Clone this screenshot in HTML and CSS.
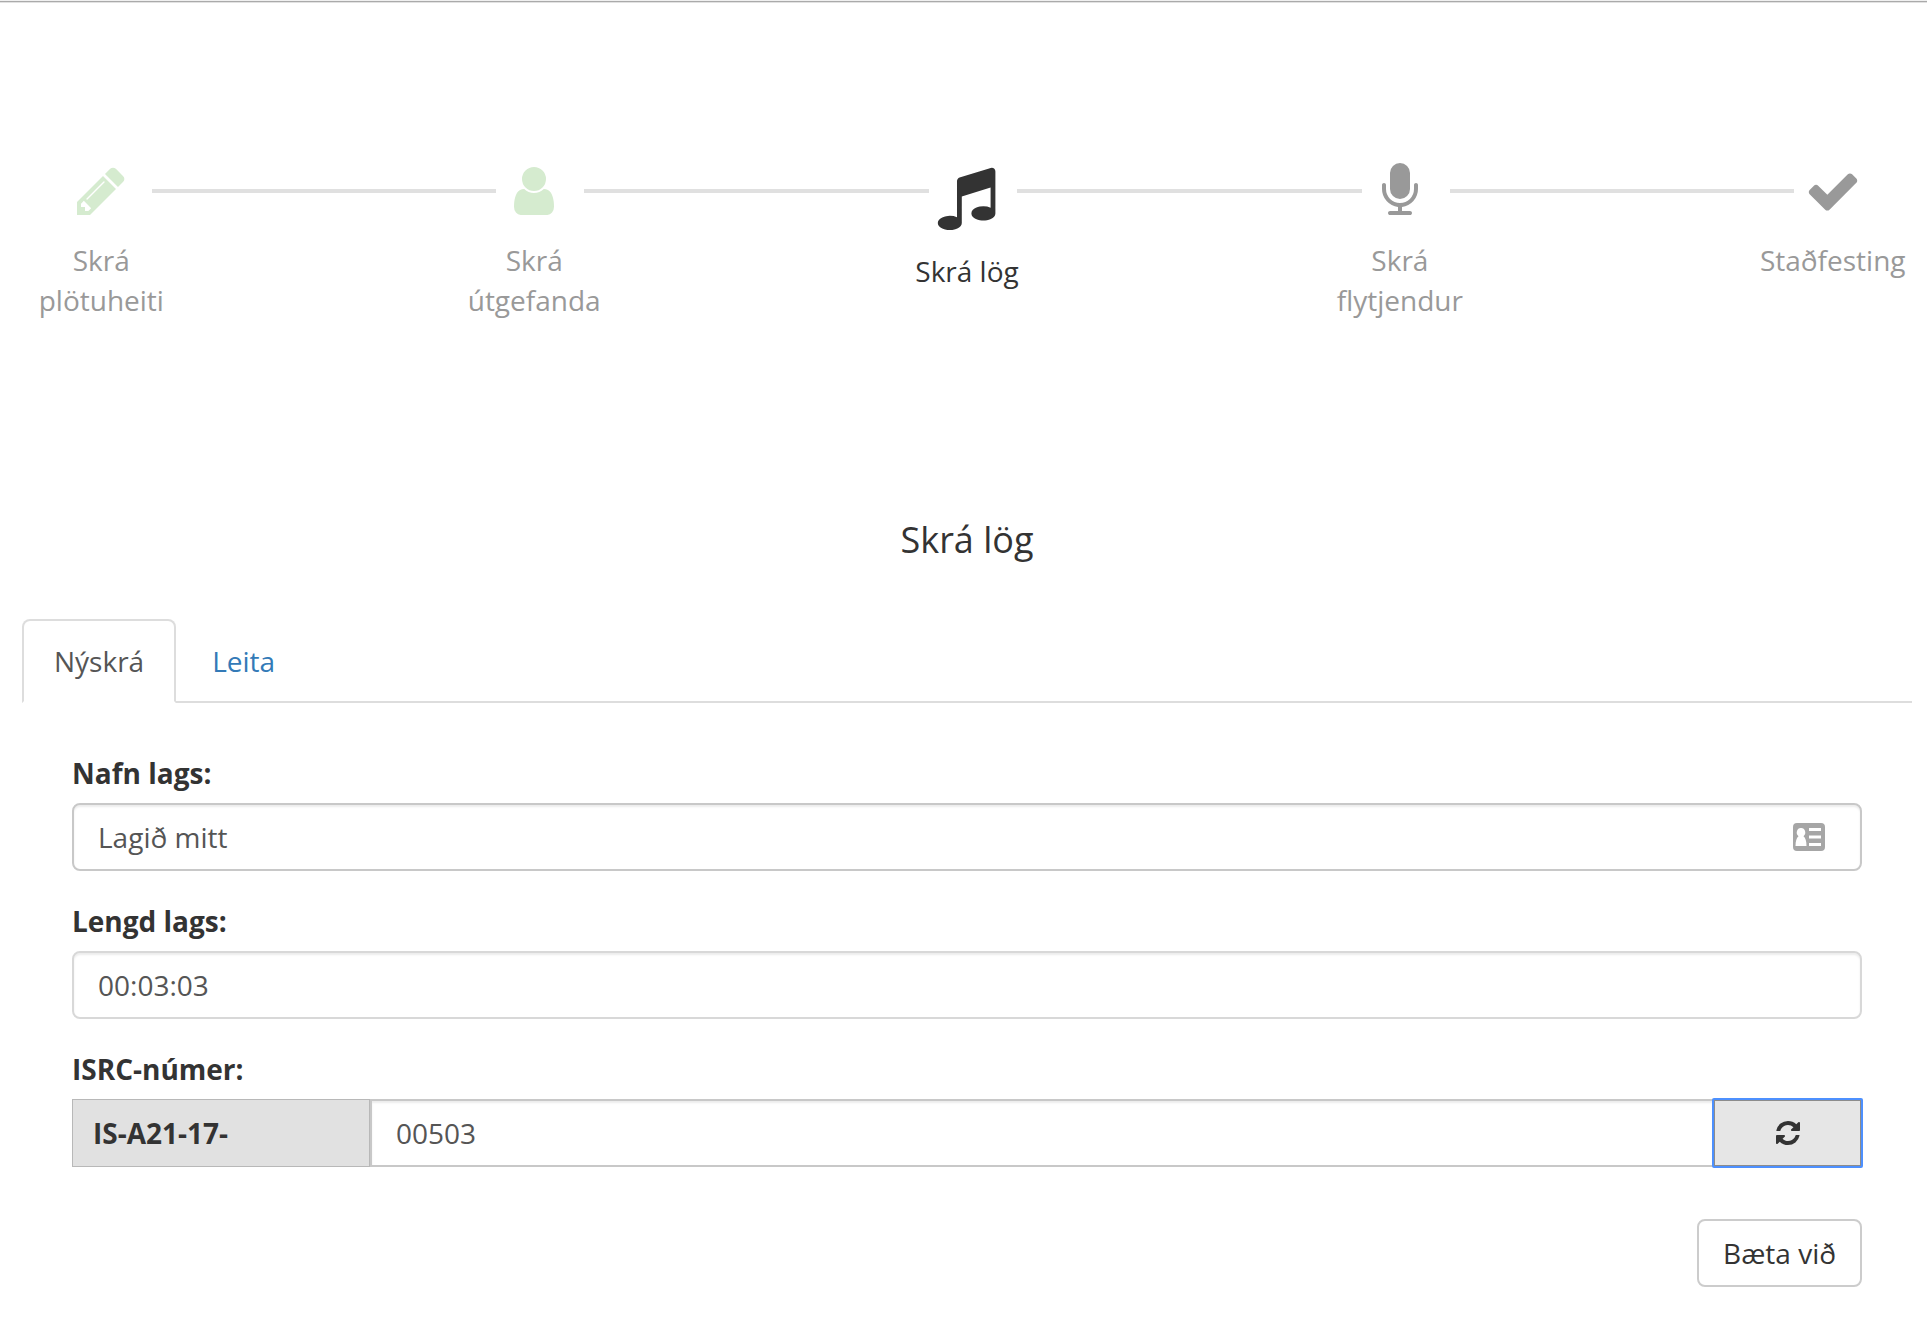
FILE: index.html
```html
<!DOCTYPE html>
<html lang="is">
<head>
<meta charset="utf-8">
<title>Skrá lög</title>
<link rel="stylesheet" href="styles.css">
</head>
<body>
<main class="page">
  <nav class="steps">
    <div class="step done">
      <svg class="icon" viewBox="0 0 1792 1792"><path d="M491 1536l91-91-235-235-91 91v107h128v128h107zm523-928q0-22-22-22-10 0-17 7l-542 542q-7 7-7 17 0 22 22 22 10 0 17-7l542-542q7-7 7-17zm-54-192l416 416-832 832h-416v-416zm683 96q0 53-37 90l-166 166-416-416 166-165q36-38 90-38 53 0 91 38l235 234q37 39 37 91z"/></svg>
      <div class="step-label">Skrá<br>plötuheiti</div>
    </div>
    <div class="connector"></div>
    <div class="step done">
      <svg class="icon" viewBox="0 0 1792 1792"><path d="M1536 1399q0 109-62.500 187t-150.500 78h-854q-88 0-150.500-78t-62.500-187q0-85 8.500-160.500t31.500-152 58.500-131 94-89 134.500-34.500q131 128 313 128t313-128q76 0 134.500 34.500t94 89 58.500 131 31.500 152 8.500 160.500zm-256-887q0 159-112.500 271.500t-271.500 112.500-271.500-112.500-112.500-271.500 112.500-271.500 271.500-112.500 271.500 112.500 112.500 271.500z"/></svg>
      <div class="step-label">Skrá<br>útgefanda</div>
    </div>
    <div class="connector"></div>
    <div class="step current">
      <svg class="icon" viewBox="0 0 1792 1792"><path d="M1664 224v1120q0 50-34 89t-86 60.500-103.500 32-96.500 10.500-96.500-10.500-103.500-32-86-60.500-34-89 34-89 86-60.500 103.500-32 96.500-10.500q105 0 192 39v-537l-768 237v709q0 50-34 89t-86 60.500-103.500 32-96.500 10.500-96.500-10.500-103.500-32-86-60.500-34-89 34-89 86-60.500 103.500-32 96.500-10.500q105 0 192 39v-967q0-31 19-56.500t49-35.500l832-256q12-4 28-4 40 0 68 28t28 68z"/></svg>
      <div class="step-label">Skrá lög</div>
    </div>
    <div class="connector"></div>
    <div class="step">
      <svg class="icon" viewBox="0 0 1792 1792"><path d="M1472 704v128q0 221-147.500 384.500t-364.500 187.500v132h256q26 0 45 19t19 45-19 45-45 19h-640q-26 0-45-19t-19-45 19-45 45-19h256v-132q-217-24-364.500-187.500t-147.500-384.500v-128q0-26 19-45t45-19 45 19 19 45v128q0 185 131.500 316.500t316.500 131.500 316.500-131.500 131.500-316.500v-128q0-26 19-45t45-19 45 19 19 45zm-256-384v512q0 132-94 226t-226 94-226-94-94-226v-512q0-132 94-226t226-94 226 94 94 226z"/></svg>
      <div class="step-label">Skrá<br>flytjendur</div>
    </div>
    <div class="connector"></div>
    <div class="step">
      <svg class="icon" viewBox="0 0 1792 1792"><path d="M1671 566q0 40-28 68l-724 724-136 136q-28 28-68 28t-68-28l-136-136-362-362q-28-28-28-68t28-68l136-136q28-28 68-28t68 28l294 295 656-657q28-28 68-28t68 28l136 136q28 28 28 68z"/></svg>
      <div class="step-label">Staðfesting</div>
    </div>
  </nav>

  <h1 class="title">Skrá lög</h1>

  <div class="tabs">
    <a class="tab active">Nýskrá</a>
    <a class="tab">Leita</a>
  </div>

  <form class="form">
    <label class="label" for="name">Nafn lags:</label>
    <div class="field name-field">
      <input class="control" id="name" type="text" value="Lagið mitt">
      <svg class="card-icon" viewBox="0 0 32 28"><path fill-rule="evenodd" d="M4 0h24a4 4 0 0 1 4 4v20a4 4 0 0 1-4 4H4a4 4 0 0 1-4-4V4a4 4 0 0 1 4-4zM8 5a4 4.500 0 0 0-2.500 8.200C3.500 15 2.500 18 2.500 23h11c0-5-1-8-3-9.800A4 4.500 0 0 0 8 5zM16 5v3h12V5zM16 12.500v3h12v-3zM16 20v3h12v-3z"/></svg>
    </div>
    <label class="label" for="length">Lengd lags:</label>
    <div class="field length-field">
      <input class="control" id="length" type="text" value="00:03:03">
    </div>
    <label class="label" for="isrc">ISRC-númer:</label>
    <div class="field isrc-field">
      <span class="prefix">IS-A21-17-</span>
      <input class="control" id="isrc" type="text" value="00503">
      <button class="refresh" type="button" aria-label="Endurnýja">
        <svg class="refresh-icon" viewBox="0 0 1792 1792"><path d="M1639 1056q0 5-1 7-64 268-268 434.500t-478 166.500q-146 0-282.500-55t-243.500-157l-129 129q-19 19-45 19t-45-19-19-45v-448q0-26 19-45t45-19h448q26 0 45 19t19 45-19 45l-137 137q71 66 161 102t187 36q134 0 250-65t186-179q11-17 53-117 8-23 30-23h192q13 0 22.500 9.500t9.500 22.500zm25-800v448q0 26-19 45t-45 19h-448q-26 0-45-19t-19-45 19-45l138-138q-148-137-349-137-134 0-250 65t-186 179q-11 17-53 117-8 23-30 23h-199q-13 0-22.500-9.500t-9.500-22.500v-7q65-268 270-434.500t480-166.500q146 0 284 55.500t245 156.500l130-129q19-19 45-19t45 19 19 45z"/></svg>
      </button>
    </div>
    <div class="actions"><button class="add" type="button">Bæta við</button></div>
  </form>
</main>
</body>
</html>
```
FILE: styles.css
```css
* { box-sizing: border-box; }

body {
  margin: 0;
  background: #fff;
  color: #333;
  font: 28px/40px "Open Sans", sans-serif;
}

input, button { font: inherit; margin: 0; }

.page {
  height: 1323px;
  overflow: hidden;
  border-top: 1px solid #f0f0f0;
  box-shadow: inset 0 1px #aaa, inset 0 2px #e2e2e2;
}

.steps {
  display: flex;
  height: 356px;
  padding: 161px 44px 0 63px;
}

.step {
  flex: 0 0 88.600px;
  min-width: 0;
  display: flex;
  flex-direction: column;
  align-items: center;
  padding-right: 12px;
  color: #999;
  fill: #999;
}

.icon {
  flex: none;
  width: 56px;
  height: 56px;
  margin: 1px 0 21px;
}

.step-label { text-align: center; white-space: nowrap; }
.done { fill: #d5ebcf; }
.current { color: #333; fill: #333; }
.current .icon { width: 67.200px; height: 67.200px; margin: 0.800px 0 21px; }

.connector {
  flex: 1;
  height: 4px;
  margin-top: 27px;
  background: #e0e0e0;
}

.title {
  margin: 163px 0 59px 7px;
  font-size: 36px;
  font-weight: 400;
  line-height: 40px;
  text-align: center;
}

.tabs {
  display: flex;
  gap: 4px;
  margin: 0 15px 0 22px;
  box-shadow: inset 0 -2px #ddd;
}

.tab {
  padding: 20px 30px;
  border: 2px solid transparent;
  border-radius: 8px 8px 0 0;
  color: #337ab7;
}

.tab.active {
  border-color: #ddd #ddd transparent;
  background: #fff;
  color: #555;
}

.form { padding: 50px 65px 0 72px; }

.label {
  display: block;
  margin-bottom: 10px;
  font-weight: 700;
}

.field {
  display: flex;
  height: 68px;
  margin-bottom: 30px;
}

.control {
  flex: 1;
  min-width: 0;
  padding: 12px 24px;
  border: 2px solid #c8c8c8;
  border-radius: 8px;
  outline: 0;
  background: #fff;
  color: #555;
  box-shadow: inset 0 2px 2px rgba(0, 0, 0, .075);
}

.length-field .control { border-color: #d8d8d8; }

.name-field { position: relative; }

.card-icon {
  position: absolute;
  top: 20px;
  right: 37px;
  width: 32px;
  height: 28px;
  fill: #a6a6a6;
}

.isrc-field .control { border-radius: 0; border-right: 0; }

.prefix {
  width: 298px;
  padding: 13px 20px;
  border: 1px solid #b8b8b8;
  background: #e1e1e1;
  font-weight: 700;
}

.refresh {
  display: flex;
  align-items: center;
  justify-content: center;
  width: 149px;
  padding: 0;
  border: 2px solid #8c8c8c;
  border-radius: 1px;
  outline: 2px solid #4d90fe;
  outline-offset: -1px;
  background: #e6e6e6;
}

.refresh-icon { width: 28px; height: 28px; fill: #333; }

.actions {
  display: flex;
  justify-content: flex-end;
  padding-top: 22px;
}

.add {
  height: 68px;
  padding: 12px 24px;
  border: 2px solid #ccc;
  border-radius: 8px;
  background: #fff;
  color: #333;
}
```
